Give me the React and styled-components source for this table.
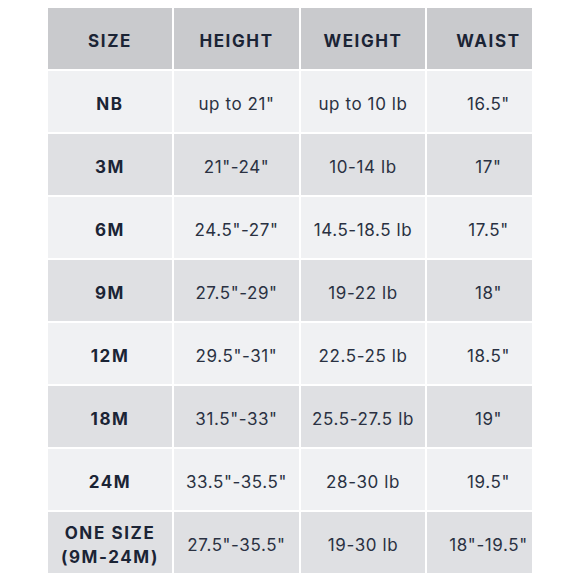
import styled, { createGlobalStyle } from 'styled-components';

const GlobalStyle = createGlobalStyle`
  body {
    margin: 0;
    background: #ffffff;
    font-family: Inter, "Noto Sans", sans-serif;
  }
`;

const Page = styled.div`
  padding: 8px 0 0 48px;
`;

const Table = styled.div`
  display: grid;
  grid-template-columns: 124px 125px 124px 105px;
  grid-auto-rows: 61px;
  gap: 2px;
  width: 484px;
  background: #ffffff;
`;

const Cell = styled.div`
  display: flex;
  align-items: center;
  justify-content: center;
  text-align: center;
  padding-top: 4px;
  padding-left: ${(p) => (p.$last ? '18px' : '0')};
  background: ${(p) => p.$bg};
  color: ${(p) => (p.$bold ? '#1b2435' : '#2a3142')};
  font-size: 17px;
  font-weight: ${(p) => (p.$bold ? 700 : 400)};
  letter-spacing: ${(p) => (p.$bold ? '1.6px' : '0.6px')};
  line-height: 24px;
`;

const header = ['SIZE', 'HEIGHT', 'WEIGHT', 'WAIST'];

const rows = [
  ['NB', 'up to 21"', 'up to 10 lb', '16.5"'],
  ['3M', '21"-24"', '10-14 lb', '17"'],
  ['6M', '24.5"-27"', '14.5-18.5 lb', '17.5"'],
  ['9M', '27.5"-29"', '19-22 lb', '18"'],
  ['12M', '29.5"-31"', '22.5-25 lb', '18.5"'],
  ['18M', '31.5"-33"', '25.5-27.5 lb', '19"'],
  ['24M', '33.5"-35.5"', '28-30 lb', '19.5"'],
  [<>ONE SIZE<br />(9M-24M)</>, '27.5"-35.5"', '19-30 lb', '18"-19.5"'],
];

export default function App() {
  return (
    <>
      <GlobalStyle />
      <Page>
        <Table>
          {header.map((h, i) => (
            <Cell key={h} $bg="#c9cacd" $bold $last={i === 3}>
              {h}
            </Cell>
          ))}
          {rows.map((row, r) =>
            row.map((val, c) => (
              <Cell
                key={r + '-' + c}
                $bg={r % 2 === 0 ? '#f0f1f3' : '#dfe0e3'}
                $bold={c === 0}
                $last={c === 3}
              >
                {val}
              </Cell>
            ))
          )}
        </Table>
      </Page>
    </>
  );
}
